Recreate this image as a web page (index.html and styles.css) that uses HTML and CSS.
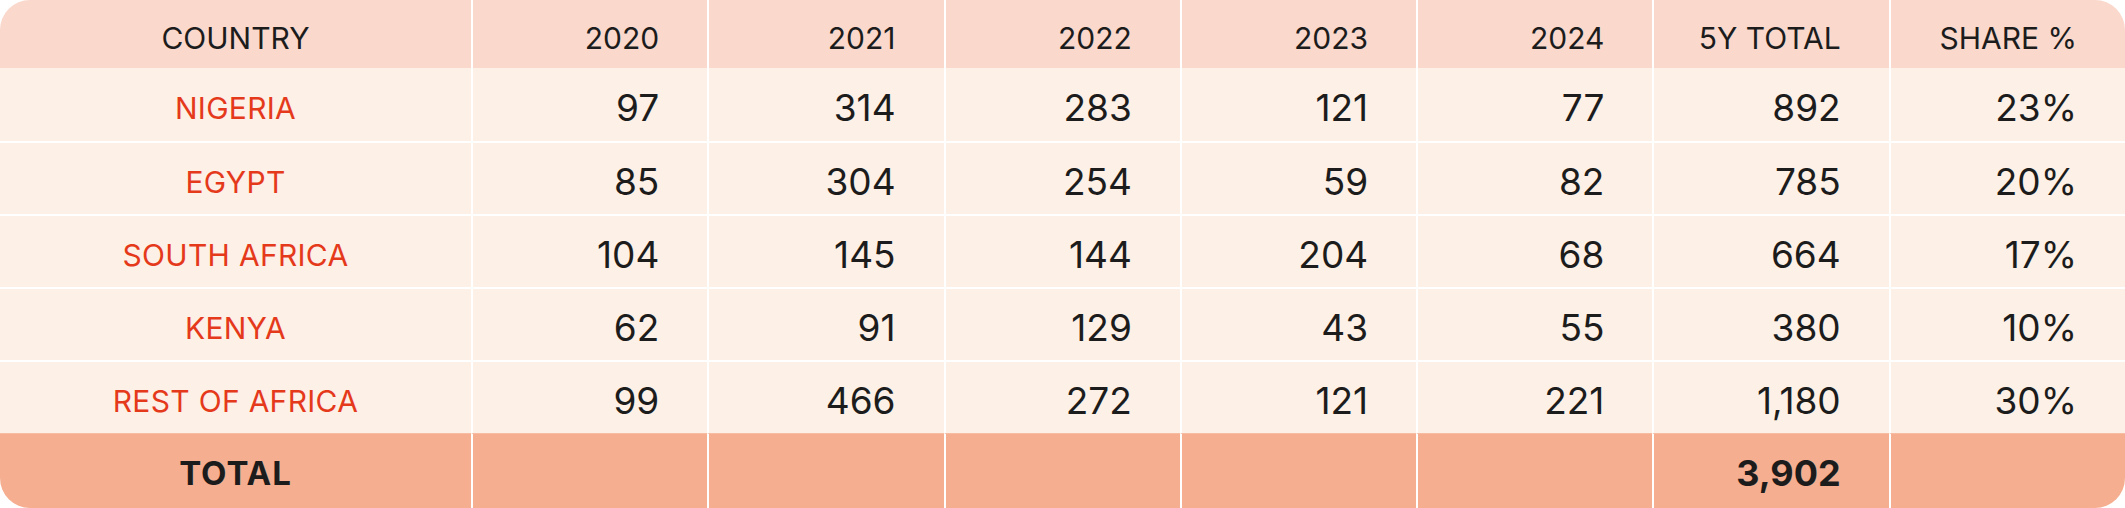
FILE: index.html
```html
<!DOCTYPE html>
<html lang="en">

<head>
  <meta charset="UTF-8" />
  <meta name="viewport" content="width=device-width, initial-scale=1.0" />
  <title>africa table</title>
  <link rel="stylesheet" href="styles.css">
</head>

<body>
  <div class="card">
    <table class="grid">
      <colgroup>
        <col class="col-country">
        <col><col><col><col><col><col><col>
      </colgroup>
      <thead>
        <tr>
          <th class="name">COUNTRY</th>
          <th>2020</th>
          <th>2021</th>
          <th>2022</th>
          <th>2023</th>
          <th>2024</th>
          <th>5Y TOTAL</th>
          <th>SHARE %</th>
        </tr>
      </thead>
      <tbody>
        <tr>
          <td class="name">NIGERIA</td>
          <td>97</td><td>314</td><td>283</td><td>121</td><td>77</td><td>892</td><td>23%</td>
        </tr>
        <tr>
          <td class="name">EGYPT</td>
          <td>85</td><td>304</td><td>254</td><td>59</td><td>82</td><td>785</td><td>20%</td>
        </tr>
        <tr>
          <td class="name">SOUTH AFRICA</td>
          <td>104</td><td>145</td><td>144</td><td>204</td><td>68</td><td>664</td><td>17%</td>
        </tr>
        <tr>
          <td class="name">KENYA</td>
          <td>62</td><td>91</td><td>129</td><td>43</td><td>55</td><td>380</td><td>10%</td>
        </tr>
        <tr>
          <td class="name">REST OF AFRICA</td>
          <td>99</td><td>466</td><td>272</td><td>121</td><td>221</td><td>1,180</td><td>30%</td>
        </tr>
      </tbody>
      <tfoot>
        <tr>
          <td class="name">TOTAL</td>
          <td></td><td></td><td></td><td></td><td></td><td>3,902</td><td></td>
        </tr>
      </tfoot>
    </table>
  </div>
</body>

</html>
```

FILE: styles.css
```css
* {
  margin: 0;
  padding: 0;
  box-sizing: border-box;
}

body {
  background: #fff;
  font-family: Inter, "Noto Sans", sans-serif;
  color: #1c1c1c;
}

.card {
  width: 2125px;
  height: 508px;
  border-radius: 30px;
  overflow: hidden;
}

.grid {
  width: 100%;
  height: 100%;
  table-layout: fixed;
  border-collapse: separate;
  border-spacing: 0;
}

.col-country {
  width: 471px;
}

.grid th,
.grid td {
  text-align: right;
  padding: 6px 48px 0 0;
  border-left: 2px solid #fff;
  white-space: nowrap;
}

.grid th:first-child,
.grid td:first-child {
  border-left: none;
}

.grid .name {
  text-align: center;
  padding-right: 0;
}

/* header */
.grid thead tr {
  height: 68px;
}

.grid th {
  background: #fad8cc;
  font-weight: 400;
  font-size: 30px;
  padding-top: 8px;
}

/* body rows */
.grid tbody tr {
  height: 73px;
}

.grid tbody td {
  background: #fdf0e6;
  font-size: 37px;
  border-top: 2px solid #fff;
}

.grid tbody tr:first-child td {
  border-top: none;
}

.grid tbody td.name {
  color: #e5391b;
  font-size: 30px;
  letter-spacing: 0.3px;
}

/* total */
.grid tfoot tr {
  height: 75px;
}

.grid tfoot td {
  background: #f5ae8f;
  font-weight: 700;
  font-size: 36px;
  border-top: 1px solid #f7bca2;
  padding-top: 3px;
}

.grid tfoot td.name {
  font-size: 33px;
  letter-spacing: 1px;
}
```
